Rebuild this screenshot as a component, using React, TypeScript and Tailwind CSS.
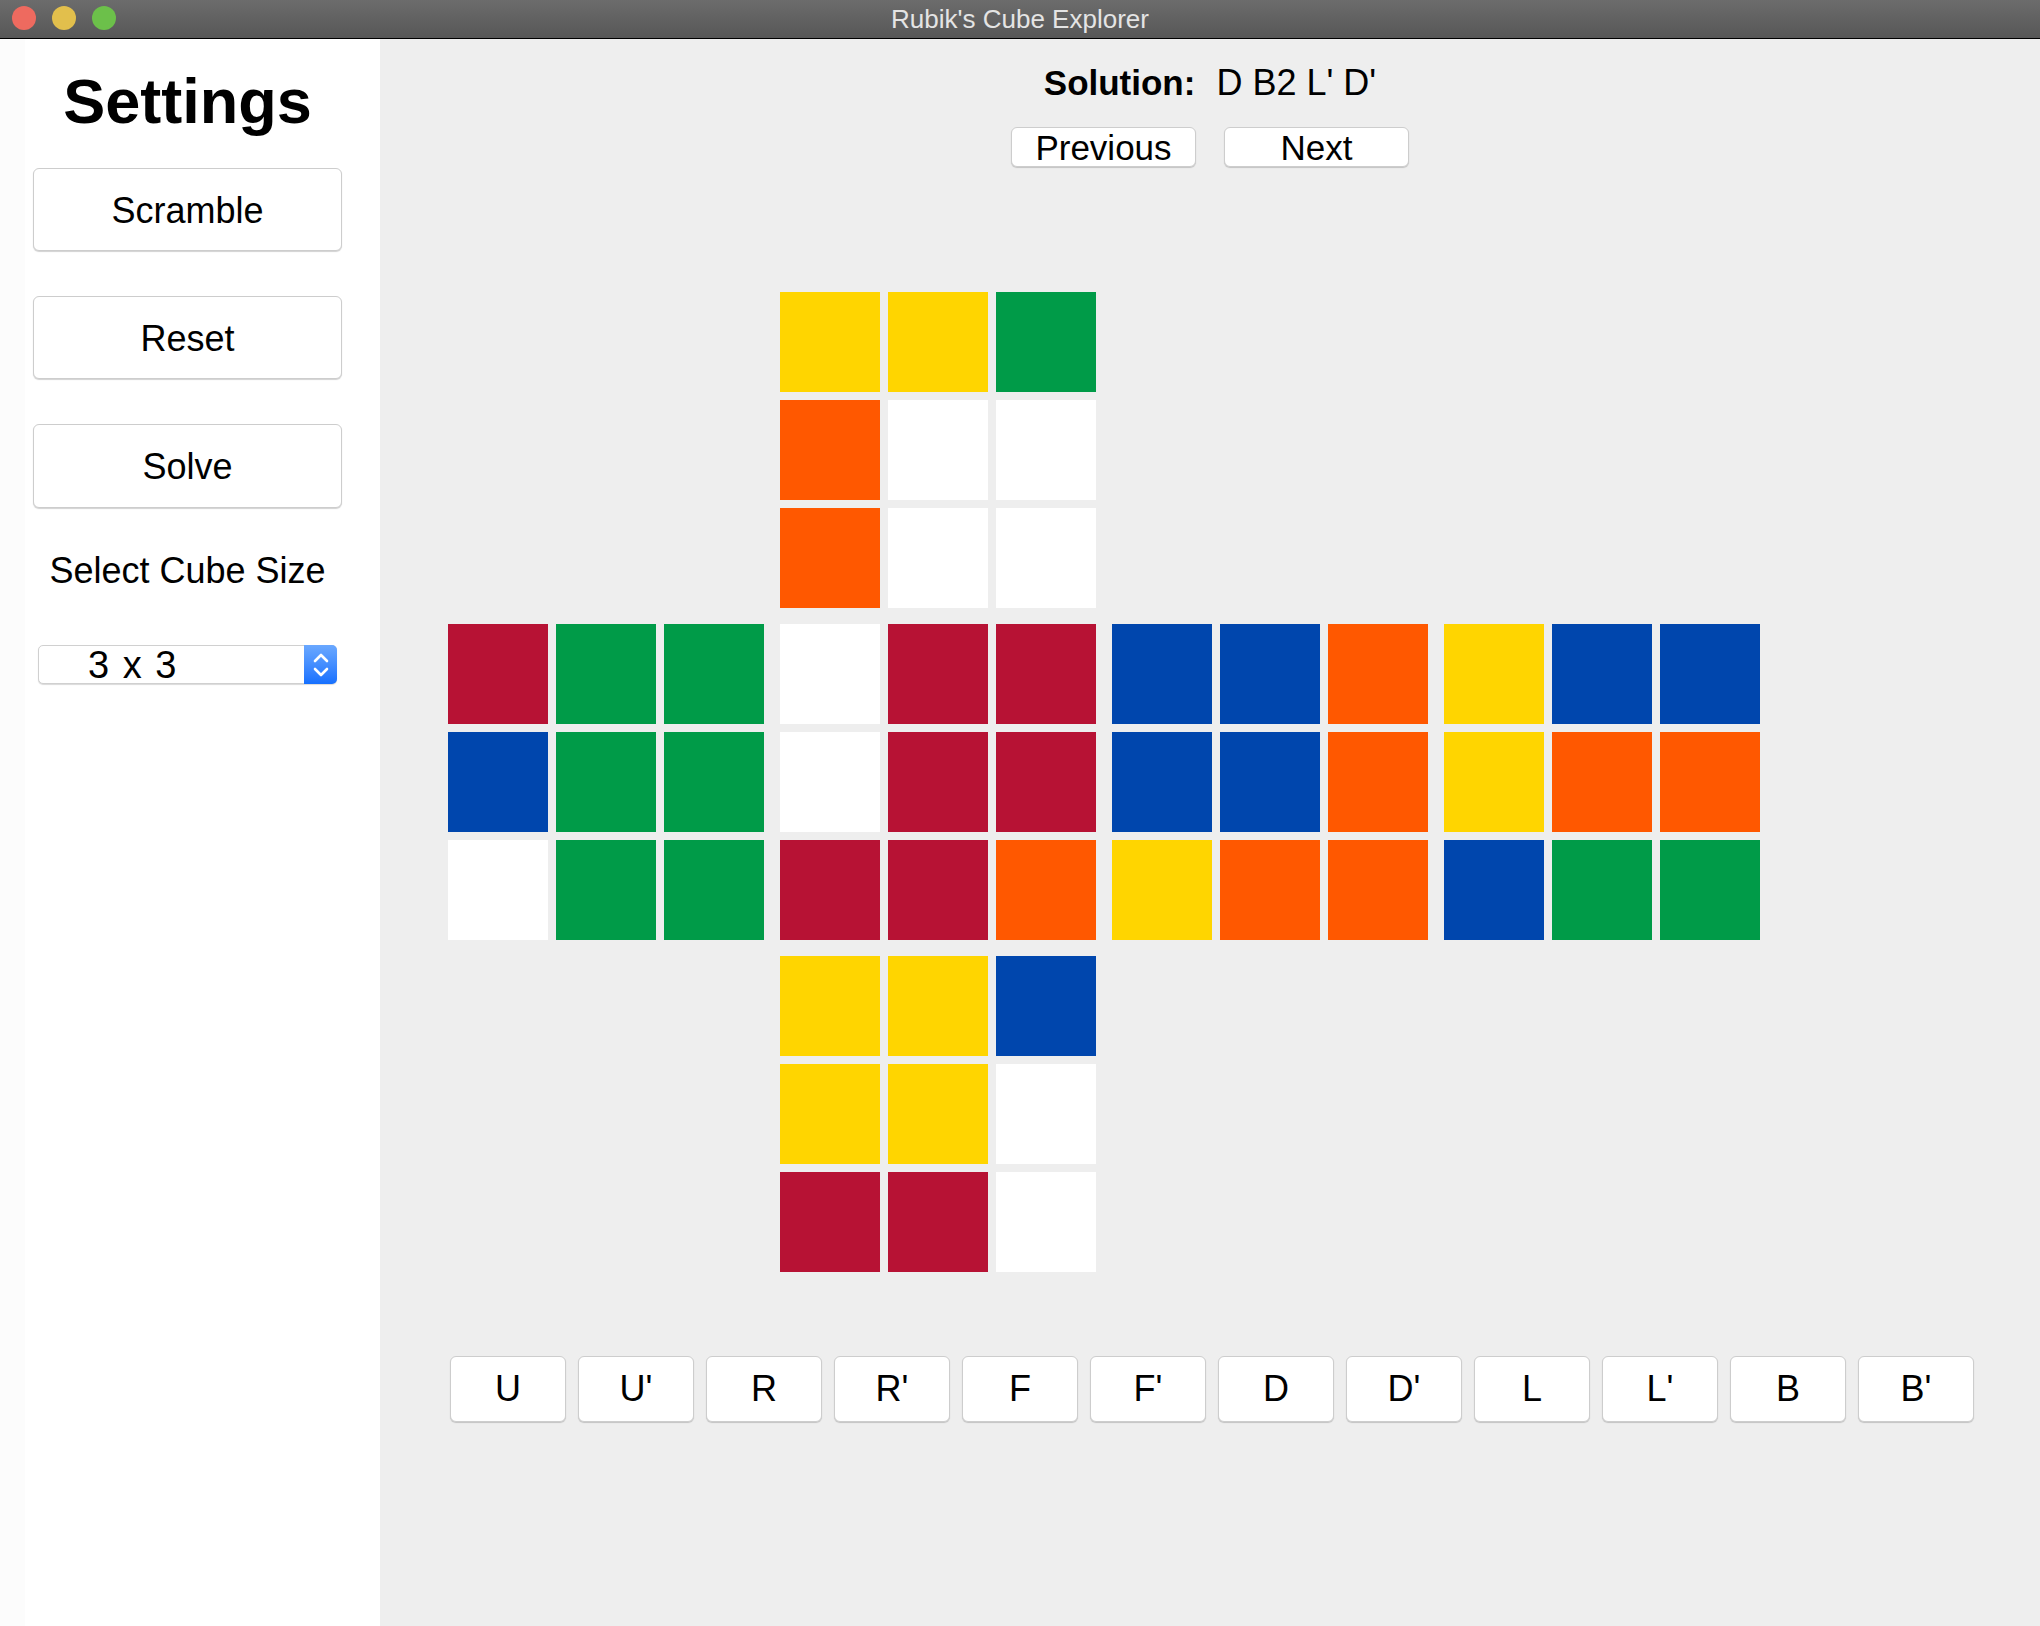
import React from "react"

const C: Record<string, string> = {
  Y: "bg-[#ffd500]",
  G: "bg-[#009b48]",
  O: "bg-[#ff5800]",
  W: "bg-white",
  R: "bg-[#b71234]",
  B: "bg-[#0046ad]",
}

const faces = [
  { pos: "col-start-2 row-start-1", s: "YYGOWWOWW" },
  { pos: "col-start-1 row-start-2", s: "RGGBGGWGG" },
  { pos: "col-start-2 row-start-2", s: "WRRWRRRRO" },
  { pos: "col-start-3 row-start-2", s: "BBOBBOYOO" },
  { pos: "col-start-4 row-start-2", s: "YBBYOOBGG" },
  { pos: "col-start-2 row-start-3", s: "YYBYYWRRW" },
]

const moves = ["U", "U'", "R", "R'", "F", "F'", "D", "D'", "L", "L'", "B", "B'"]

const btn =
  "bg-white border border-[#cdcdcd] rounded-[6px] shadow-[0_1px_1px_rgba(0,0,0,0.18)] flex items-center justify-center text-black"

function Face({ pos, s }: { pos: string; s: string }) {
  return (
    <div className={`${pos} grid grid-cols-[repeat(3,100px)] grid-rows-[repeat(3,100px)] gap-[8px]`}>
      {s.split("").map((c, i) => (
        <div key={i} className={C[c]} />
      ))}
    </div>
  )
}

export default function App() {
  return (
    <div className="w-[2040px] h-[1626px] flex flex-col font-['Liberation_Sans',Arial,sans-serif] overflow-hidden">
      {/* title bar */}
      <div className="relative h-[39px] shrink-0 bg-gradient-to-b from-[#6c6c6c] to-[#575757] border-b border-black flex items-center justify-center">
        <div className="absolute left-[12px] top-[6px] flex gap-[16px]">
          <span className="w-[24px] h-[24px] rounded-full bg-[#ee6a5f]" />
          <span className="w-[24px] h-[24px] rounded-full bg-[#e2bf4c]" />
          <span className="w-[24px] h-[24px] rounded-full bg-[#6cc04a]" />
        </div>
        <span className="text-[26px] leading-none text-[#e4e4e4]">Rubik's Cube Explorer</span>
      </div>

      <div className="flex flex-1 min-h-0">
        {/* sidebar */}
        <div className="w-[380px] shrink-0 bg-white flex">
          <div className="w-[25px] bg-[#fcfcfc]" />
          <div className="ml-[8px] w-[309px] flex flex-col">
            <h1 className="mt-[31px] text-[63px] leading-[63px] font-bold text-center text-black">Settings</h1>
            <button className={`${btn} mt-[35px] h-[83px] pt-[2px] text-[36px] leading-[36px]`}>Scramble</button>
            <button className={`${btn} mt-[45px] h-[83px] pt-[2px] text-[36px] leading-[36px]`}>Reset</button>
            <button className={`${btn} mt-[45px] h-[84px] pt-[2px] text-[36px] leading-[36px]`}>Solve</button>
            <div className="mt-[45px] text-[36px] leading-[36px] text-center text-black">Select Cube Size</div>
            <div className="mt-[56px] ml-[5px] w-[299px] h-[39px] flex bg-white border border-[#d0d0d0] rounded-[5px] shadow-[0_1px_1px_rgba(0,0,0,0.15)]">
              <div className="flex-1 pl-[49px] text-[38px] leading-[38px] [word-spacing:3px] text-black">3 x 3</div>
              <div className="w-[33px] -my-px -mr-px rounded-r-[5px] bg-gradient-to-b from-[#6aa8ff] to-[#1570ff] flex items-center justify-center">
                <svg width="18" height="30" viewBox="0 0 18 30" fill="none" stroke="white" strokeWidth="2.6" strokeLinecap="round" strokeLinejoin="round">
                  <path d="M3 11 L9 5 L15 11" />
                  <path d="M3 19 L9 25 L15 19" />
                </svg>
              </div>
            </div>
          </div>
        </div>

        {/* main */}
        <div className="flex-1 bg-[#eeeeee] flex flex-col">
          <div className="mt-[26px] flex justify-center items-baseline gap-[21px] leading-[36px] text-black">
            <span className="text-[35px] font-bold">Solution:</span>
            <span className="text-[36px]">D B2 L' D'</span>
          </div>
          <div className="mt-[26px] flex justify-center gap-[28px]">
            <button className={`${btn} w-[185px] h-[40px] text-[35px] leading-[35px]`}>Previous</button>
            <button className={`${btn} w-[185px] h-[40px] text-[35px] leading-[35px]`}>Next</button>
          </div>
          <div className="mt-[125px] ml-[68px] grid grid-cols-[repeat(4,316px)] grid-rows-[repeat(3,316px)] gap-[16px]">
            {faces.map((f, i) => (
              <Face key={i} pos={f.pos} s={f.s} />
            ))}
          </div>
          <div className="mt-[84px] ml-[70px] flex gap-[12px]">
            {moves.map((m) => (
              <button key={m} className={`${btn} w-[116px] h-[66px] text-[36px] leading-[36px]`}>
                {m}
              </button>
            ))}
          </div>
        </div>
      </div>
    </div>
  )
}
